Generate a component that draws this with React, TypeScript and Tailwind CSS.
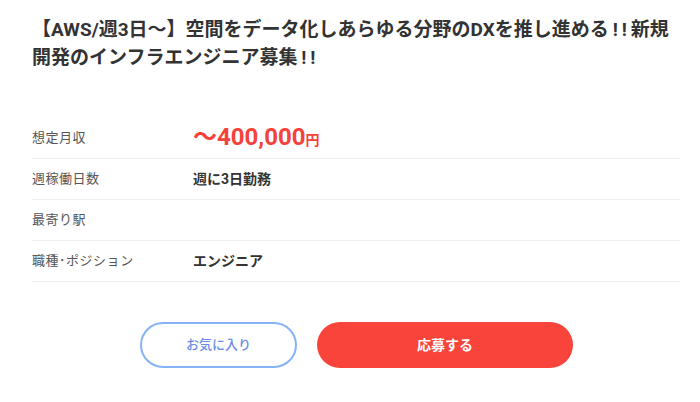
const font = "font-['Roboto','Noto_Sans_CJK_JP',sans-serif]";

type Row = { label: string; value?: React.ReactNode };

function InfoRow({ label, value, tall }: Row & { tall?: boolean }) {
  return (
    <div
      className={`flex items-center border-b border-[#f0f0f0] ${tall ? "h-[42px]" : "h-[41px]"}`}
    >
      <div className="w-[161px] shrink-0 text-[13px] tracking-[0.04em] text-[#555]">{label}</div>
      <div className="text-[14px] font-bold text-[#333]">{value}</div>
    </div>
  );
}

// thin spaces keep the "!!" airy like the original without extra spans
const bangs = "\u2009!\u2009!\u2009";

export default function App() {
  return (
    <div className={`${font} h-[402px] w-[700px] bg-white pl-[32px] pr-[19px] pt-[16px]`}>
      <h1 className="text-[19px] font-bold leading-[28px] text-[#333]">
        {`【AWS/週3日〜】空間をデータ化しあらゆる分野のDXを推し進める${bangs}新規開発のインフラエンジニア募集${bangs}`}
      </h1>

      <div className="mt-[45px]">
        <InfoRow
          label="想定月収"
          tall
          value={
            <span className="text-[#f5423a]">
              <span className="text-[24px] font-bold leading-none">〜400,000</span>
              <span className="text-[14px] font-bold">円</span>
            </span>
          }
        />
        <InfoRow label="週稼働日数" value="週に3日勤務" />
        <InfoRow label="最寄り駅" />
        <InfoRow label="職種･ポジション" value="エンジニア" />
      </div>

      <div className="mt-[40px] flex justify-center gap-[20px]">
        <button className="h-[46px] w-[157px] rounded-full border-2 border-[#86b3f6] text-[13px] font-medium text-[#6b8de6]">
          お気に入り
        </button>
        <button className="h-[46px] w-[256px] rounded-full bg-[#f8443a] text-[14px] font-bold text-white">
          応募する
        </button>
      </div>
    </div>
  );
}
